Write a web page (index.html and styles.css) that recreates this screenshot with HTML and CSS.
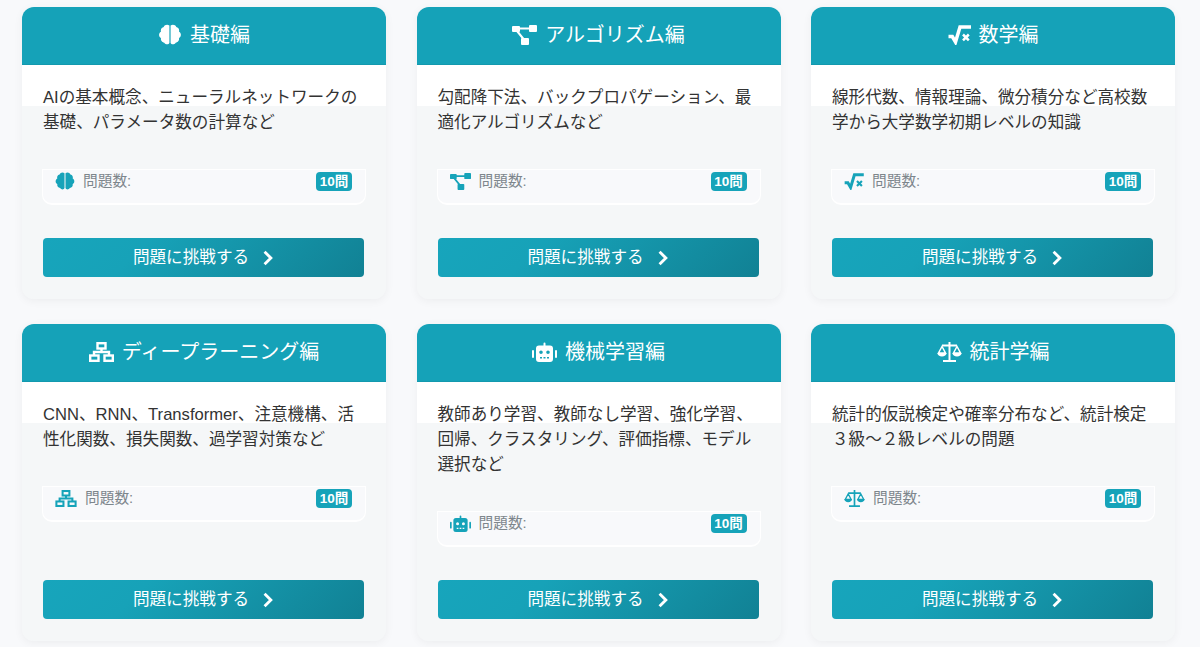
FILE: index.html
```html
<!DOCTYPE html>
<html lang="ja">
<head>
<meta charset="utf-8">
<title>問題カテゴリ</title>
<link rel="stylesheet" href="styles.css">
</head>
<body>
<svg class="defs" width="0" height="0" aria-hidden="true">
  <symbol id="i-brain" viewBox="0 0 20 18">
    <path d="M9.500 1.200C7.600 0 5.200.7 4.600 2.600 2.600 3.100 1.700 4.900 2.300 6.500.1 7.800.1 11 2.300 12.100c-.5 2 1 3.800 2.800 3.900 1.100 1.900 3.900 1.800 4.400.1z"/>
    <path d="M10.500 1.200c1.900-1.200 4.300-.5 4.900 1.400 2 .5 2.900 2.300 2.300 3.900 2.200 1.300 2.200 4.500 0 5.600.5 2-1 3.800-2.800 3.900-1.100 1.900-3.900 1.800-4.400.1z"/>
  </symbol>
  <symbol id="i-diagram" viewBox="0 0 25 20">
    <rect x="0" y="1" width="8" height="6" rx="1"/>
    <rect x="17" y="0" width="8" height="7" rx="1"/>
    <rect x="9" y="13" width="8" height="7" rx="1"/>
    <path d="M7 3.500h11M5 6l6.500 8" fill="none" stroke="currentColor" stroke-width="2"/>
  </symbol>
  <symbol id="i-sqrt" viewBox="0 0 23 20">
    <path d="M.5 11.500h3.800l3.200 5.500 4.500-15h11" fill="none" stroke="currentColor" stroke-width="3.500"/>
    <path d="M15 9.500l5.800 5.800m0-5.800L15 15.300" fill="none" stroke="currentColor" stroke-width="2.500"/>
  </symbol>
  <symbol id="i-network" viewBox="0 0 25 20">
    <g fill="none" stroke="currentColor" stroke-width="2.400">
      <rect x="8.500" y="1.200" width="8" height="5.300"/>
      <rect x="1.200" y="13.500" width="8.300" height="5.300"/>
      <rect x="15.500" y="13.500" width="8.300" height="5.300"/>
      <path d="M12.500 6.500v3.500M5 13.500V10h15v3.500"/>
    </g>
  </symbol>
  <symbol id="i-robot" viewBox="0 0 25 20">
    <path fill-rule="evenodd" d="M7 3.500h4.500V1.500a1 1 0 1 1 2 0v2H18a3 3 0 0 1 3 3V17a3 3 0 0 1-3 3H7a3 3 0 0 1-3-3V6.500a3 3 0 0 1 3-3zM9 8.500a1.800 1.800 0 1 0 0 3.600 1.800 1.800 0 0 0 0-3.600zm7 0a1.800 1.800 0 1 0 0 3.600 1.800 1.800 0 0 0 0-3.600zM8 15v1.500h2V15zm3.500 0v1.500h2V15zm3.500 0v1.500h2V15z"/>
    <rect x="0" y="8" width="2" height="8" rx="1"/>
    <rect x="23" y="8" width="2" height="8" rx="1"/>
  </symbol>
  <symbol id="i-scale" viewBox="0 0 25 20">
    <path d="M11.500 0h2v2.500H20v2h-6.500V18H19v2H6v-2h5.500V4.500H5v-2h6.500z"/>
    <path d="M5 4.500 1.500 11h7zm15 0L16.500 11h7z" fill="none" stroke="currentColor" stroke-width="1.500"/>
    <path d="M.5 11h9c0 2-2 3.500-4.500 3.500S.5 13 .5 11zm15 0h9c0 2-2 3.500-4.500 3.500S15.500 13 15.500 11z"/>
  </symbol>
  <symbol id="i-chevron" viewBox="0 0 10 14">
    <path d="M2 1.500 7.500 7 2 12.500" fill="none" stroke="currentColor" stroke-width="2.500"/>
  </symbol>
</svg>

<main class="grid">
  <article class="card">
    <h2 class="card-head"><svg class="head-icon w-brain"><use href="#i-brain"/></svg>基礎編</h2>
    <div class="card-body">
      <p class="desc">AIの基本概念、ニューラルネットワークの基礎、パラメータ数の計算など</p>
      <div class="stats">
        <svg class="stat-icon sw-brain"><use href="#i-brain"/></svg>
        <span class="stat-label">問題数:</span>
        <span class="badge">10問</span>
      </div>
      <a class="btn"><span class="btn-text">問題に挑戦する</span><svg class="chev"><use href="#i-chevron"/></svg></a>
    </div>
  </article>

  <article class="card">
    <h2 class="card-head"><svg class="head-icon"><use href="#i-diagram"/></svg>アルゴリズム編</h2>
    <div class="card-body">
      <p class="desc">勾配降下法、バックプロパゲーション、最適化アルゴリズムなど</p>
      <div class="stats">
        <svg class="stat-icon"><use href="#i-diagram"/></svg>
        <span class="stat-label">問題数:</span>
        <span class="badge">10問</span>
      </div>
      <a class="btn"><span class="btn-text">問題に挑戦する</span><svg class="chev"><use href="#i-chevron"/></svg></a>
    </div>
  </article>

  <article class="card">
    <h2 class="card-head"><svg class="head-icon w-sqrt"><use href="#i-sqrt"/></svg>数学編</h2>
    <div class="card-body">
      <p class="desc">線形代数、情報理論、微分積分など高校数学から大学数学初期レベルの知識</p>
      <div class="stats">
        <svg class="stat-icon sw-sqrt"><use href="#i-sqrt"/></svg>
        <span class="stat-label">問題数:</span>
        <span class="badge">10問</span>
      </div>
      <a class="btn"><span class="btn-text">問題に挑戦する</span><svg class="chev"><use href="#i-chevron"/></svg></a>
    </div>
  </article>

  <article class="card">
    <h2 class="card-head"><svg class="head-icon"><use href="#i-network"/></svg>ディープラーニング編</h2>
    <div class="card-body">
      <p class="desc">CNN、RNN、Transformer、注意機構、活性化関数、損失関数、過学習対策など</p>
      <div class="stats">
        <svg class="stat-icon sw-network"><use href="#i-network"/></svg>
        <span class="stat-label">問題数:</span>
        <span class="badge">10問</span>
      </div>
      <a class="btn"><span class="btn-text">問題に挑戦する</span><svg class="chev"><use href="#i-chevron"/></svg></a>
    </div>
  </article>

  <article class="card">
    <h2 class="card-head"><svg class="head-icon"><use href="#i-robot"/></svg>機械学習編</h2>
    <div class="card-body">
      <p class="desc">教師あり学習、教師なし学習、強化学習、回帰、クラスタリング、評価指標、モデル選択など</p>
      <div class="stats">
        <svg class="stat-icon"><use href="#i-robot"/></svg>
        <span class="stat-label">問題数:</span>
        <span class="badge">10問</span>
      </div>
      <a class="btn"><span class="btn-text">問題に挑戦する</span><svg class="chev"><use href="#i-chevron"/></svg></a>
    </div>
  </article>

  <article class="card">
    <h2 class="card-head"><svg class="head-icon"><use href="#i-scale"/></svg>統計学編</h2>
    <div class="card-body">
      <p class="desc">統計的仮説検定や確率分布など、統計検定３級～２級レベルの問題</p>
      <div class="stats">
        <svg class="stat-icon"><use href="#i-scale"/></svg>
        <span class="stat-label">問題数:</span>
        <span class="badge">10問</span>
      </div>
      <a class="btn"><span class="btn-text">問題に挑戦する</span><svg class="chev"><use href="#i-chevron"/></svg></a>
    </div>
  </article>
</main>
</body>
</html>
```

FILE: styles.css
```css
* { box-sizing: border-box; }

html, body { margin: 0; padding: 0; }

body {
  background: #f8f9fb;
  font-family: "Liberation Sans", "Noto Sans CJK JP", sans-serif;
  color: #333;
  overflow: hidden;
}

.defs { position: absolute; }

.grid {
  display: grid;
  grid-template-columns: repeat(3, 364px);
  grid-template-rows: 292px 317px;
  column-gap: 30.5px;
  row-gap: 25px;
  padding: 7px 24px 6px 22px;
}

.card {
  display: flex;
  flex-direction: column;
  background: #f5f7f8;
  border-radius: 12px;
  overflow: hidden;
  box-shadow: 0 2px 10px rgba(0, 0, 0, 0.05);
}

.card-head {
  display: flex;
  align-items: center;
  justify-content: center;
  gap: 8px;
  height: 58px;
  margin: 0;
  padding-bottom: 2px;
  background: #15a2b8;
  border-bottom: 1px solid #1399ae;
  color: #fff;
  font-size: 20px;
  font-weight: 400;
  line-height: 1;
}

.head-icon {
  width: 25px;
  height: 20px;
  fill: currentColor;
}

.w-brain { width: 24px; height: 21px; }
.w-sqrt { width: 23px; }

.card-body {
  flex: 1;
  display: flex;
  flex-direction: column;
  padding: 20px 20px 22px;
  background: linear-gradient(#fff 41px, #f5f7f8 41px);
}

.desc {
  margin: 0 1px 34px;
  font-size: 16.6px;
  line-height: 25px;
  color: #333;
}

.stats {
  display: flex;
  align-items: flex-start;
  gap: 8px;
  height: 36px;
  padding: 2px 13px 0 12px;
  background: #f8f9fb;
  border: 1px solid #fff;
  border-bottom-width: 2px;
  border-radius: 0 0 10px 10px;
  color: #16a3b9;
}

.stat-icon {
  width: 21px;
  height: 17px;
  margin-top: 1px;
  fill: currentColor;
}

.sw-brain { width: 20px; height: 18px; margin-top: 0; }
.sw-sqrt { width: 20px; }
.sw-network { width: 22px; }

.stat-label {
  flex: 1;
  font-size: 14.7px;
  line-height: 18px;
  color: #7d868c;
}

.badge {
  width: 36px;
  height: 19px;
  background: #16a3b9;
  border-radius: 4px;
  color: #fff;
  font-size: 13.5px;
  font-weight: 700;
  line-height: 19px;
  text-align: center;
}

.btn {
  display: flex;
  align-items: center;
  justify-content: center;
  gap: 13px;
  height: 39px;
  margin: auto 2px 0 1px;
  background: linear-gradient(135deg, #17a5bc 0%, #17a2b8 30%, #118194 100%);
  border-radius: 4px;
  color: #fff;
  font-size: 16.6px;
  line-height: 1;
}

.btn-text { padding-top: 2px; }

.chev {
  width: 12px;
  height: 16px;
}
```
